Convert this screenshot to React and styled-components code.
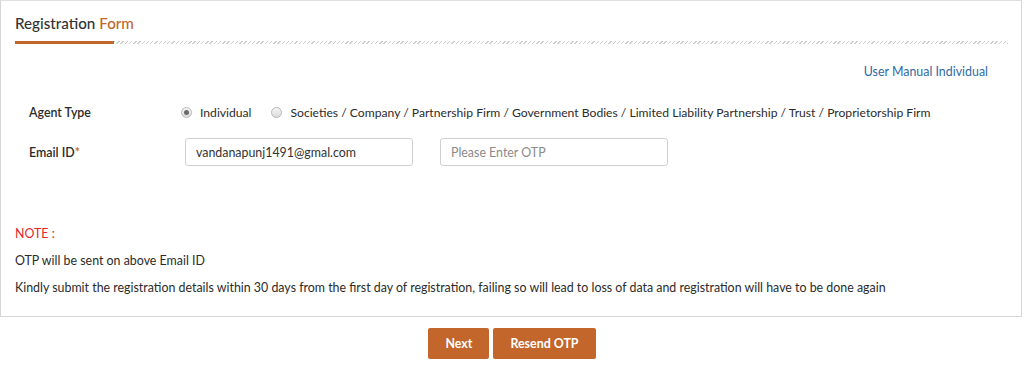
import React from "react";
import styled, { createGlobalStyle } from "styled-components";

const ORANGE = "#c2662c";
const FS = "12.4px";

const Global = createGlobalStyle`
  html, body { margin: 0; padding: 0; background: #fff; }
  body { font-family: "Lato", "Open Sans", sans-serif; color: #2b2b2b; }
  * { box-sizing: border-box; }
`;

const Page = styled.div`
  width: 1024px;
  height: 369px;
`;

const Panel = styled.section`
  width: 1022px;
  height: 317px;
  border: 1px solid #d6d6d6;
  border-top-color: #e0e0e0;
  display: flex;
  flex-direction: column;
`;

const Header = styled.div`
  padding: 12px 13px 0 14px;
`;

const Title = styled.h2`
  margin: 0;
  font-size: 15.2px;
  font-weight: 500;
  color: #333;
  line-height: 20px;
`;

const Accent = styled.span`
  color: ${ORANGE};
`;

const Rule = styled.div`
  display: flex;
  height: 3px;
  margin-top: 8px;
`;

const RuleSolid = styled.div`
  width: 99px;
  background: ${ORANGE};
`;

const RuleHatch = styled.div`
  flex: 1;
  background: repeating-linear-gradient(
    -45deg,
    #cfcfcf 0 1px,
    transparent 1px 3px
  );
`;

const Body = styled.div`
  padding: 20px 33px 0 28px;
`;

const LinkRow = styled.div`
  display: flex;
  justify-content: flex-end;
  height: 16px;
`;

const Link = styled.a`
  font-size: ${FS};
  color: #2f6aa6;
  text-decoration: none;
  line-height: 16px;
`;

const Form = styled.div`
  margin-top: 24px;
  display: flex;
  flex-direction: column;
  gap: 18px;
`;

const Row = styled.div`
  display: grid;
  grid-template-columns: 152px 1fr;
  align-items: center;
  min-height: ${(p) => p.$h || "16px"};
`;

const Label = styled.div`
  font-size: ${FS};
  font-weight: 600;
  color: #2b2b2b;
`;

const Star = styled.span`
  color: ${ORANGE};
`;

const Radios = styled.div`
  display: flex;
  align-items: center;
  gap: 20px;
`;

const RadioItem = styled.label`
  display: flex;
  align-items: center;
  gap: 8px;
  font-size: 12.15px;
  color: #2b2b2b;
`;

const RadioDot = styled.span`
  width: 11px;
  height: 11px;
  border-radius: 50%;
  border: 1px solid #b9b9b9;
  background: linear-gradient(#f4f4f4, #dcdcdc);
  display: inline-flex;
  align-items: center;
  justify-content: center;
  &::after {
    content: "";
    width: 5px;
    height: 5px;
    border-radius: 50%;
    background: ${(p) => (p.$checked ? "#6a6a6a" : "transparent")};
  }
`;

const Inputs = styled.div`
  display: flex;
  gap: 27px;
  padding-left: 4px;
`;

const Input = styled.input`
  width: 228px;
  height: 28px;
  border: 1px solid #cfcfcf;
  border-radius: 3px;
  padding: 0 10px;
  font-family: inherit;
  font-size: ${FS};
  color: #333;
  outline: none;
  &::placeholder { color: #8a8a8a; }
`;

const Notes = styled.div`
  padding: 59px 14px 0;
  display: flex;
  flex-direction: column;
  gap: 10px;
`;

const Note = styled.p`
  margin: 0;
  font-size: ${FS};
  line-height: 17px;
  color: ${(p) => (p.$red ? "#e8262b" : "#2b2b2b")};
`;

const Actions = styled.div`
  display: flex;
  justify-content: center;
  gap: 4px;
  margin-top: 11px;
`;

const Button = styled.button`
  height: 31px;
  padding: 0 ${(p) => p.$px || "18px"};
  background: ${ORANGE};
  color: #fff;
  border: none;
  border-radius: 2px;
  font-family: inherit;
  font-size: ${FS};
  font-weight: 700;
`;

export default function App() {
  return (
    <Page>
      <Global />
      <Panel>
        <Header>
          <Title>
            Registration <Accent>Form</Accent>
          </Title>
          <Rule>
            <RuleSolid />
            <RuleHatch />
          </Rule>
        </Header>
        <Body>
          <LinkRow>
            <Link href="#">User Manual Individual</Link>
          </LinkRow>
          <Form>
            <Row>
              <Label>Agent Type</Label>
              <Radios>
                <RadioItem>
                  <RadioDot $checked />
                  Individual
                </RadioItem>
                <RadioItem>
                  <RadioDot />
                  Societies / Company / Partnership Firm / Government Bodies / Limited Liability Partnership / Trust / Proprietorship Firm
                </RadioItem>
              </Radios>
            </Row>
            <Row $h="28px">
              <Label>
                Email ID<Star>*</Star>
              </Label>
              <Inputs>
                <Input defaultValue="vandanapunj1491@gmal.com" />
                <Input placeholder="Please Enter OTP" />
              </Inputs>
            </Row>
          </Form>
        </Body>
        <Notes>
          <Note $red>NOTE :</Note>
          <Note>OTP will be sent on above Email ID</Note>
          <Note>
            Kindly submit the registration details within 30 days from the first day of registration, failing so will lead to loss of data and registration will have to be done again
          </Note>
        </Notes>
      </Panel>
      <Actions>
        <Button $px="17px">Next</Button>
        <Button $px="17px">Resend OTP</Button>
      </Actions>
    </Page>
  );
}
